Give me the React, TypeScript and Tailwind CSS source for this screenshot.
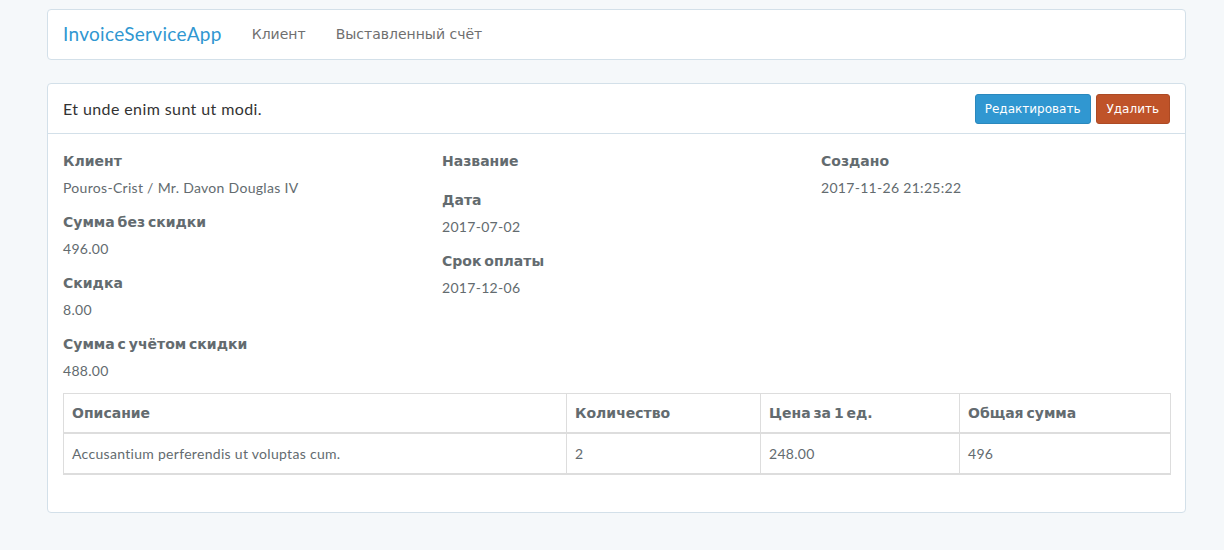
import React from "react";

const LAT = "font-['Lato','DejaVu_Sans',sans-serif] tracking-[0.3px]";
const CYR = "font-['DejaVu_Sans',sans-serif]";
const BOLD = "font-['DejaVu_Sans',sans-serif] font-bold [word-spacing:-2px]";

function Item({ label, value, last, emptyGap }: { label: string; value?: string; last?: boolean; emptyGap?: boolean }) {
  return (
    <div className={last ? "mb-3" : "mb-[14px]"}>
      <div className={`${BOLD} text-[14px] leading-5 text-[#636b6f]`}>{label}</div>
      {emptyGap ? (
        <div className="h-[5px]" />
      ) : (
        <div className={`${LAT} mt-[7px] text-[14px] leading-5 text-[#636b6f]`}>{value}</div>
      )}
    </div>
  );
}

export default function App() {
  return (
    <div className="min-h-[550px] bg-[#f5f8fa] pt-[9px]">
      <div className="ml-[47px] w-[1139px]">
        {/* navbar */}
        <div className="flex h-[51px] items-center rounded-[4px] border border-[#d3e0e9] bg-white">
          <div className={`font-['Lato','DejaVu_Sans',sans-serif] tracking-[0.3px] pl-[15px] pr-[15px] text-[19px] text-[#3097d1]`}>InvoiceServiceApp</div>
          <div className={`${CYR} px-[15px] text-[14px] text-[#6f6f6f]`}>Клиент</div>
          <div className={`${CYR} px-[15px] text-[14px] text-[#6f6f6f]`}>Выставленный счёт</div>
        </div>

        {/* panel */}
        <div className="mt-[23px] rounded-[4px] border border-[#d3e0e9] bg-white">
          <div className="flex h-[50px] items-center justify-between border-b border-[#d3e0e9] px-[15px]">
            <div className={`font-['Lato','DejaVu_Sans',sans-serif] tracking-[0.4px] text-[16px] text-[#333]`}>Et unde enim sunt ut modi.</div>
            <div className="flex gap-[5px]">
              <button className={`${CYR} h-[30px] rounded-[3px] border border-[#2a88bd] bg-[#3097d1] px-[9px] text-[12px] text-white`}>
                Редактировать
              </button>
              <button className={`${CYR} h-[30px] rounded-[3px] border border-[#ad4a24] bg-[#bf5329] px-[10px] text-[12px] text-white`}>
                Удалить
              </button>
            </div>
          </div>

          <div className="px-[15px] pt-[17px] pb-[37px]">
            <div className="grid grid-cols-[379px_379px_1fr]">
              <div>
                <Item label="Клиент" value="Pouros-Crist / Mr. Davon Douglas IV" />
                <Item label="Сумма без скидки" value="496.00" />
                <Item label="Скидка" value="8.00" />
                <Item label="Сумма с учётом скидки" value="488.00" last />
              </div>
              <div>
                <Item label="Название" emptyGap />
                <Item label="Дата" value="2017-07-02" />
                <Item label="Срок оплаты" value="2017-12-06" />
              </div>
              <div>
                <Item label="Создано" value="2017-11-26 21:25:22" />
              </div>
            </div>

            <table className="w-[1108px] border-collapse border border-[#ddd] text-left text-[14px] text-[#636b6f]">
              <thead>
                <tr className="border-b-2 border-[#ddd]">
                  <th className={`${BOLD} w-[503px] border border-[#ddd] px-[8px] py-[9px] leading-5`}>Описание</th>
                  <th className={`${BOLD} w-[194px] border border-[#ddd] px-[8px] py-[9px] leading-5`}>Количество</th>
                  <th className={`${BOLD} w-[199px] border border-[#ddd] px-[8px] py-[9px] leading-5`}>Цена за 1 ед.</th>
                  <th className={`${BOLD} border border-[#ddd] px-[8px] py-[9px] leading-5`}>Общая сумма</th>
                </tr>
              </thead>
              <tbody>
                <tr className="border-b-2 border-[#ddd]">
                  <td className={`${LAT} border border-[#ddd] px-[8px] pt-[10px] pb-[9px] leading-5`}>Accusantium perferendis ut voluptas cum.</td>
                  <td className={`${LAT} border border-[#ddd] px-[8px] pt-[10px] pb-[9px] leading-5`}>2</td>
                  <td className={`${LAT} border border-[#ddd] px-[8px] pt-[10px] pb-[9px] leading-5`}>248.00</td>
                  <td className={`${LAT} border border-[#ddd] px-[8px] pt-[10px] pb-[9px] leading-5`}>496</td>
                </tr>
              </tbody>
            </table>
          </div>
        </div>
      </div>
    </div>
  );
}
